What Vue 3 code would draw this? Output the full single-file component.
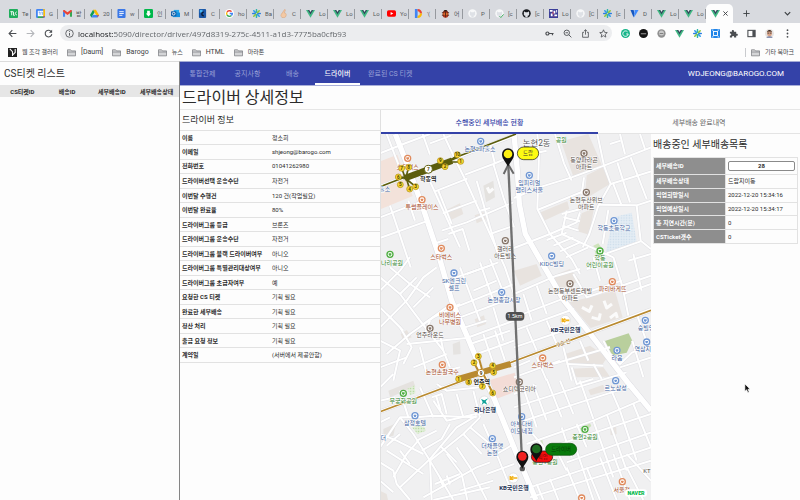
<script setup>
import { ref } from 'vue'

const vue = '<path d="M0 1h10L5 9.6z" fill="#41b883"/><path d="M2 1h6L5 6z" fill="#34495e"/><path d="M3.7 1h2.6L5 3.2z" fill="#e8f3ee"/>'
const burst = '<g stroke-width="1.7" stroke-linecap="round"><path d="M5 .8V3.6M5 6.4v2.8" stroke="#2fb5a8"/><path d="M.8 5h2.8M6.4 5h2.8" stroke="#2a7de1"/><path d="M2 2l2 2M6 6l2 2" stroke="#2a9be8"/><path d="M8 2L6 4M4 6L2 8" stroke="#8cc63f"/></g>'
const cat = (c, extra = '') => `<circle cx="5" cy="5" r="4.7" fill="${c}"/><path d="M3.7 9.4V7.6C2 7.4 1.8 5.9 2.1 5 2 4.4 2 3.5 2.3 2.9c.7 0 1.100.4 1.500.7h2.400c.4-.3.8-.7 1.500-.7.3.6.3 1.500.2 2.100.3.9.1 2.400-1.600 2.600v1.800z" fill="#dee1e6"/>${extra}`

const glyphs = {
  talk: '<rect width="10" height="10" rx="1" fill="#1fae5c"/><path d="M1.500 3h3M3 3v4M5 3v4h1.500M8.700 3.500C7 2.500 6 6.500 8.700 6.600" stroke="#fff" fill="none" stroke-width="1"/>',
  calendar: '<rect width="10" height="10" rx="1.500" fill="#4285f4"/><path d="M8 0h.5A1.500 1.500 0 0 1 10 1.500V8H8z" fill="#fbbc04"/><path d="M2 8h6v2H2z" fill="#34a853"/><path d="M8 8h2l-2 2z" fill="#ea4335"/><rect x="2" y="2" width="6" height="6" fill="#fff"/><path d="M3 3.500h1.500v3M6 3.500h1v3" stroke="#4285f4" fill="none" stroke-width=".8"/>',
  gmail: '<path d="M0 2v6.500h2.300V4z" fill="#4285f4"/><path d="M10 2v6.500H7.700V4z" fill="#34a853"/><path d="M0 2.500C0 1 1.500 1 2.300 1.600L5 3.700l2.700-2.100C8.500 1 10 1 10 2.500L7.700 4.800 5 6.800 2.300 4.800z" fill="#ea4335"/>',
  drive: '<path d="M3.400.8h3.200L10 6.700H6.800z" fill="#fbbc04"/><path d="M3.400.8L5 3.600 1.600 9.500 0 6.700z" fill="#0f9d58"/><path d="M3.200 6.700H10L8.400 9.500H1.600z" fill="#4285f4"/><path d="M8.300 6.700H10L8.400 9.500z" fill="#ea4335"/>',
  docs: '<rect x=".5" width="9" height="10" rx="1" fill="#3b78e7"/><path d="M2.500 3h5M2.500 5h5M2.500 7h3.500" stroke="#fff" stroke-width="1"/>',
  phone: '<rect width="10" height="10" rx="1.500" fill="#00b74a"/><path d="M3.500 2h3v3H8L5 8.300 2 5h1.500z" fill="#fff"/>',
  outlook: '<path d="M3 1h6v5H3z" fill="#28a8ea"/><path d="M2 4l8 0v5H2z" fill="#1490df"/><rect y="2.500" width="6" height="5.500" rx=".7" fill="#0f5ea8"/><circle cx="3" cy="5.200" r="1.500" fill="none" stroke="#fff" stroke-width=".9"/>',
  code: '<rect x="1" width="8" height="10" rx="1" fill="#1b57a6"/><path d="M2 1h3v3H2z" fill="#46b3f3"/><path d="M6.500 3.500c-3 0-3 4 0 4" fill="none" stroke="#0b1d3a" stroke-width="1.500"/>',
  google: '<circle cx="5" cy="5" r="5" fill="#fff"/><g fill="none" stroke-width="1.500"><path d="M7.300 2.900A3.200 3.200 0 0 0 2.200 3.600" stroke="#ea4335"/><path d="M2.200 3.600a3.200 3.200 0 0 0 0 2.900" stroke="#fbbc04"/><path d="M2.200 6.500A3.200 3.200 0 0 0 7.100 7.300" stroke="#34a853"/><path d="M7.100 7.300A3 3 0 0 0 8.200 5H5.200" stroke="#4285f4"/></g>',
  burst,
  hand: '<path d="M3.300 9.500C2 8 1.500 6 3 5.400L6 .8c.6-.5 1.300 0 1 .8L5.800 4.400c1.700 0 2.400 1 2.200 2.200-.2 1.700-1 2.900-2.200 2.900z" fill="#f3c9a5" stroke="#d49a6c" stroke-width=".5"/>',
  vue,
  youtube: '<rect y="1.500" width="10" height="7" rx="1.800" fill="#f00"/><path d="M4 3.300L7 5 4 6.700z" fill="#fff"/>',
  daum: '<path d="M1 0h3v10H1z" fill="#4285f4"/><path d="M4 0c3 0 5 2 5 5H6.500C6.500 3.500 5.500 2.500 4 2.500z" fill="#ea4335"/><path d="M9 5c0 3-2 5-5 5V7.500C5.500 7.500 6.500 6.500 6.500 5z" fill="#fbbc04"/>',
  bug: '<ellipse cx="5" cy="5.700" rx="3.300" ry="3.900" fill="#b3361e"/><path d="M2.500 2.800C3 .5 7 .5 7.500 2.800z" fill="#2b1a12"/><path d="M5 2.800v6.500M1 4h2M7 4h2M1 7h2M7 7h2" stroke="#3d2416" stroke-width=".8"/><circle cx="3.500" cy="5.500" r=".8" fill="#f5b13c"/><circle cx="6.500" cy="5.500" r=".8" fill="#f5b13c"/>',
  catLight: cat('#f7f8f9'),
  catCheck: cat('#f7f8f9', '<path d="M5 8l1.500 1.500L9.500 6" fill="none" stroke="#2da44e" stroke-width="1"/>'),
  catDark: cat('#15181c'),
  pixel: '<rect width="10" height="10" fill="#3c3f99"/><path d="M1 1h3v2H1zM5 2h2v3H5zM2 5h2v3H2zM6 6h3v2H6zM8 1h1v3H8z" fill="#fff"/><path d="M4 3h1v3H4zM5 8h1v1H5z" fill="#e0475c"/>',
  flag: '<path d="M.5 1h3.500l1 4-1 4.500z" fill="#1557c0"/><path d="M5 1h4.500L4.500 9.500l.5-5z" fill="#3e8bff"/>',
  grammar: '<circle cx="5" cy="5" r="5" fill="#17b58a"/><path d="M7.300 3.200A3 3 0 1 0 8 5.500H5.800" fill="none" stroke="#fff" stroke-width="1"/>',
  dark: '<circle cx="5" cy="5" r="5" fill="#141414"/><path d="M2 5.300h6" stroke="#bbb" stroke-width=".9"/>',
  grey: '<circle cx="5" cy="5" r="4.600" fill="#909090"/><circle cx="5" cy="4.500" r="2.800" fill="#c9c9c9"/><path d="M3 5h4" stroke="#777" stroke-width="1"/>',
  frame: '<rect width="10" height="10" rx="1" fill="#2185e8"/><rect x="2.800" y="2.800" width="4.400" height="4.400" fill="none" stroke="#fff" stroke-width="1"/><path d="M1.200 1.200h1.500M1.200 8.800h1.500M7.300 1.200h1.500M7.300 8.800h1.500" stroke="#fff"/>',
  puzzle: '<path d="M1 3h2.200C2.500.3 6 .3 5.500 3H8v2.200c2.500-.5 2.500 2.800 0 2.300V9.500H5.700C6 7.300 3.200 7.300 3.400 9.500H1V7.300c2 .2 2-2.400 0-2.200z" fill="#4b4e52"/>',
  panel: '<rect x="1" y="1.500" width="8" height="7" fill="none" stroke="#4b4e52" stroke-width="1.200"/><path d="M6 1.500h3v7H6z" fill="#4b4e52"/>',
  face: '<circle cx="5" cy="5" r="5" fill="#e6e3e1"/><path d="M1.500 10c.5-3 6.500-3 7 0z" fill="#8a93b0"/><ellipse cx="5" cy="4.800" rx="2.700" ry="3.300" fill="#d9a184"/><path d="M2.200 4C2 0 8 0 7.800 4L7 2.700H3z" fill="#33261f"/><path d="M2.800 4.600h1.800M5.400 4.600h1.800" stroke="#3a3a3a" stroke-width=".9"/>',
  dots: '<g fill="#4b4e52"><circle cx="5" cy="1.300" r="1"/><circle cx="5" cy="5" r="1"/><circle cx="5" cy="8.700" r="1"/></g>',
  key: '<circle cx="2.700" cy="5" r="1.700" fill="none" stroke="#4b4e52" stroke-width="1.300"/><path d="M4.300 5H9.500M8.300 5v2" stroke="#4b4e52" stroke-width="1.300" fill="none"/>',
  zoom: '<circle cx="4.200" cy="4.200" r="3" fill="none" stroke="#4b4e52" stroke-width="1"/><path d="M6.400 6.400L9.300 9.300M2.800 4.200h2.800" stroke="#4b4e52" stroke-width="1"/>',
  share: '<path d="M3.300 3.700H1.800v5.500h6.400V3.700H6.700M5 6.300V1M3.200 2.500L5 .8l1.800 1.700" fill="none" stroke="#4b4e52" stroke-width=".9"/>',
  star: '<path d="M5 .9l1.200 2.800 3 .3-2.300 2 .7 3L5 7.400 2.400 9l.7-3-2.300-2 3-.3z" fill="none" stroke="#4b4e52" stroke-width=".9"/>',
  back: '<path d="M9.300 5H1.300M4.800 1.300L1.200 5l3.600 3.700" fill="none" stroke="#4b4e52" stroke-width="1.200"/>',
  forward: '<path d="M.7 5h8M5.200 1.300L8.800 5 5.200 8.700" fill="none" stroke="#b4b6ba" stroke-width="1.200"/>',
  reload: '<path d="M8.300 3.300A3.700 3.700 0 1 0 8.700 5.700" fill="none" stroke="#4b4e52" stroke-width="1.200"/><path d="M9 .7v3.600H5.400z" fill="#4b4e52"/>',
  info: '<circle cx="5" cy="5" r="4.200" fill="none" stroke="#4b4e52" stroke-width=".9"/><path d="M5 4.400v3M5 2.400v1" stroke="#4b4e52" stroke-width="1"/>',
  folder: '<path d="M.5 2h3.500l1 1.200h4.500v5.500h-9z" fill="#d4d5d7" stroke="#75787c" stroke-width=".8"/><path d="M.5 4.500h9" stroke="#75787c" stroke-width=".7"/>',
  gallery: '<rect width="10" height="10" fill="#222"/><path d="M2 1l3 3v5M8 1v4L5 8" stroke="#fff" stroke-width="1.200" fill="none"/>',
  close: '<path d="M2 2l6 6M8 2L2 8" stroke="#3c4043" stroke-width="1.300"/>',
  plus: '<path d="M5 .5v9M.5 5h9" stroke="#3c4043" stroke-width="1.300"/>',
  down: '<path d="M2 3.500L5 6.500l3-3" fill="none" stroke="#3c4043" stroke-width="1.300"/>'
}

const browserTabs = [
  ['talk', 'Te'], ['calendar', 'G'], ['gmail', '받'], ['drive', '20'], ['docs', 'w'], ['phone', '인'],
  ['outlook', 'M'], ['code', 'C'], ['google', 'ho'], ['burst', 'Ba'], ['hand', 'C'], ['vue', 'Lo'],
  ['vue', 'Lo'], ['vue', 'Lo'], ['youtube', 'Yo'], ['daum', "'("], ['bug', '어'], ['catLight', 'P'],
  ['catCheck', '[c'], ['catDark', '[c'], ['pixel', 'Lo'], ['catLight', '[C'], ['burst', '[c'],
  ['flag', 'D'], ['vue', 'Lo'], ['vue', 'Lo']
]
const navButtons = [['back', '뒤로'], ['forward', '앞으로'], ['reload', '새로고침']]
const addressButtons = ['key', 'zoom', 'share', 'star']
const extensions = ['grammar', 'dark', 'grey', 'vue', 'burst', 'frame', 'puzzle', 'panel', 'face', 'dots']
const bookmarks = [
  ['gallery', '웹 조각 갤러리'], ['folder', '[Daum]'], ['folder', 'Barogo'],
  ['folder', '뉴스'], ['folder', 'HTML'], ['folder', '마라톤']
]
const isKorean = (t) => /[가-힣]/.test(t)

const url = ref('localhost:5090/director/driver/497d8319-275c-4511-a1d3-7775ba0cfb93')

const ticketColumns = ['CS티켓ID', '배송ID', '세부배송ID', '세부배송상태']
const menu = ['통합관제', '공지사항', '배송', '드라이버', '완료된 CS 티켓']
const activeMenu = '드라이버'

const driver = [
  ['이름', '정소희'],
  ['이메일', 'shjeong@barogo.com'],
  ['전화번호', '01041262980'],
  ['드라이버선택 운송수단', '자전거'],
  ['이번달 수행건', '120 건(작업필요)'],
  ['이번달 완료율', '80%'],
  ['드라이버그룹 등급', '브론즈'],
  ['드라이버그룹 운송수단', '자전거'],
  ['드라이버그룹 블랙 드라이버여부', '아니오'],
  ['드라이버그룹 특별관리대상여부', '아니오'],
  ['드라이버그룹 초급자여부', '예'],
  ['요청한 CS 티켓', '기획 필요'],
  ['완료한 세부배송', '기획 필요'],
  ['정산 처리', '기획 필요'],
  ['출금 요청 정보', '기획 필요'],
  ['계약일', '(서버에서 제공안함)']
]
const delivery = [
  ['세부배송상태', '드랍지이동'],
  ['픽업희망일시', '2022-12-20 15:34:16'],
  ['픽업예상일시', '2022-12-20 15:34:17'],
  ['총 지연시간(분)', '0'],
  ['CSTicket갯수', '0']
]

const areas = [
  ['#f3e2da', '0,82 52,62 98,186 0,226'],
  ['#f3dcd6', '330,738 404,716 418,768 346,796'],
  ['#e8e3df', '543,22 625,0 665,92 580,128'],
  ['#e8e3df', '620,124 668,100 690,150 614,196'],
  ['#e8e3df', '482,235 562,202 568,225 492,260'],
  ['#e8e3df', '605,238 642,222 628,302 592,292'],
  ['#e8e3df', '198,228 240,208 250,240 208,260'],
  ['#e8e3df', '284,244 310,234 318,256 290,268'],
  ['#e4e2df', '310,155 340,140 345,190 318,205'],
  ['#e8e3df', '402,410 470,390 485,425 420,455'],
  ['#e8e3df', '510,428 570,405 600,440 535,470'],
  ['#e8e3df', '568,505 705,470 728,550 632,582'],
  ['#e8e3df', '555,660 630,635 682,670 668,690 570,690'],
  ['#e8e3df', '572,704 670,700 690,728 590,730'],
  ['#e5e3e1', '218,630 240,622 242,660 220,662'],
  ['#e8e3df', '284,556 312,544 318,570 292,580'],
  ['#e8e3df', '62,600 80,588 95,610 70,620'],
  ['#e5e2df', '25,770 100,740 106,758 30,790'],
  ['#e5e2df', '10,885 48,868 40,905 10,910'],
  ['#e8e3df', '625,768 670,752 675,772 632,784'],
  ['#e8e3df', '690,880 708,872 710,900 692,904'],
  ['#e8e3df', '0,1070 20,1080 24,1098 0,1098'],
  ['url(#water)', '700,250 755,236 770,322 677,356'],
  ['url(#grass)', '82,764 104,754 106,778 90,784'],
  ['url(#grass)', '96,880 130,872 138,890 112,900'],
  ['#b9cf9d', '672,622 746,598 757,620 740,656 702,664 684,652'],
  ['#cfe3bd', '640,335 655,328 678,360 650,372'],
  ['#cfe3bd', '478,914 486,914 492,940 484,940'],
  ['#cfe3bd', '598,884 630,868 634,876 604,900']
]

const roads = [
  'M0,58L70,30 150,0', 'M20,0L66,120', 'M190,0L225,75 262,150 330,300 375,400 402,480',
  'M128,0L150,62', 'M150,28L215,4', 'M255,122L340,90 402,64', 'M165,172L262,134', 'M140,120L240,340',
  'M188,238L290,200', 'M185,290L260,265 400,205', 'M290,140L352,355', 'M0,250L118,205', 'M0,312L145,260',
  'M30,215L92,400', 'M85,200L105,260', 'M205,300L248,285 268,350', 'M340,90L370,190 402,280', 'M225,75L330,30',
  'M330,30L345,90', 'M175,170L215,270', 'M160,330L205,315', 'M300,230L330,222', 'M330,300L402,275',
  'M477,60L472,225 510,300 575,375 600,420', 'M472,0L477,60', 'M525,0L552,88 575,140', 'M402,192L477,160 575,130 672,95 813,40',
  'M652,0L672,95 692,150 655,215 628,300 608,340', 'M472,228L620,168', 'M612,130L605,180', 'M545,240L602,225',
  'M510,300L590,265 600,235', 'M692,150L813,112', 'M655,212L770,214 813,200', 'M712,85L750,205', 'M752,70L800,195',
  'M685,228L668,330', 'M402,342L510,300', 'M560,230L545,300 700,370', 'M550,250L600,262', 'M548,275L596,290',
  'M500,318L560,296M520,335L580,310M540,352L600,325M558,370L625,340', 'M770,215L782,320 813,345', 'M680,358L782,322', 'M540,20L560,10',
  'M720,0L735,60', 'M780,0L795,45', 'M700,150L725,215', 'M690,30L722,20', 'M455,60L500,50',
  'M0,430L60,480 120,560 190,650 210,700', 'M0,520L60,580 95,640 70,690', 'M0,580L80,500 130,430 170,400', 'M20,660L90,600 160,550 240,510',
  'M0,470L60,410 90,369', 'M20,540L70,590', 'M60,480L110,430', 'M100,520L160,460', 'M130,570L200,520', 'M30,400L90,450 150,490',
  'M80,630L260,612 402,560', 'M182,612L190,650', 'M240,550L402,490', 'M255,580L320,560', 'M225,520L402,450', 'M200,440L330,395',
  'M240,400L270,480 300,560', 'M300,385L340,500', 'M330,375L380,500', 'M260,420L355,385', 'M280,470L350,440', 'M340,520L370,620',
  'M310,600L340,690', 'M345,590L375,680', 'M290,660L402,620', 'M270,630L390,590', 'M120,640L140,720', 'M0,620L60,650 40,740',
  'M100,700L200,660', 'M0,700L80,670', 'M160,720L240,700', 'M130,610L150,560', 'M0,760L40,720',
  'M402,480L530,425 600,405', 'M402,550L560,490', 'M402,590L582,525', 'M430,480L455,560', 'M470,455L500,540', 'M440,580L470,650',
  'M500,560L530,630', 'M402,640L610,570', 'M580,420L620,490 740,450 813,425', 'M552,498L725,440', 'M640,369L660,440', 'M700,369L728,460 745,545',
  'M640,590L745,550 813,525', 'M760,360L785,470', 'M745,380L813,360', 'M620,405L700,385', 'M770,540L813,660', 'M757,620L790,730',
  'M670,620L690,660 720,690 757,655 813,635', 'M550,640L575,740', 'M520,690L690,640', 'M560,690L670,695', 'M640,690L665,735', 'M720,700L813,670',
  'M402,730L540,680', 'M470,670L500,740', 'M402,700L450,680', 'M575,700L590,750 640,735', 'M600,620L625,680', 'M730,480L813,450', 'M560,580L590,590',
  'M160,800L200,860 310,835', 'M155,790L185,780 200,840M168,785L182,830', 'M0,940L60,850 110,850 160,845 290,850', 'M60,850L100,900 150,980 220,1098', 'M0,900L50,920 130,960',
  'M20,950L130,1020', 'M40,1030L80,960 115,920', 'M20,935L60,900', 'M0,985L40,1010 50,1050 90,1098', 'M60,1060L150,975 230,880 290,845',
  'M90,990L60,950', 'M110,920L170,890', 'M125,950L185,915 210,870', 'M150,980L250,900 300,850', 'M130,1090L290,1000 330,985', 'M150,980L155,1098',
  'M230,940L270,1000 320,1098', 'M200,960L245,1020 262,1098', 'M250,900L305,960', 'M270,880L330,930', 'M180,935L230,985', 'M310,870L350,960 390,1060',
  'M165,1050L240,1020M180,1030L190,1060M200,1024L210,1052', 'M0,1040L40,1075', 'M0,865L30,850', 'M350,960L402,930', 'M320,1020L402,990', 'M240,1070L340,1040',
  'M60,770L85,850', 'M120,760L160,850', 'M170,750L200,770 300,760', 'M230,780L250,850', 'M280,770L300,850', 'M0,800L45,790', 'M160,1098L330,1060',
  'M402,820L560,770 740,715', 'M402,870L600,805 760,755', 'M440,930L640,860 780,800', 'M480,950L813,840', 'M560,985L700,935 813,895', 'M450,1060L600,1010 813,940',
  'M430,760L470,880', 'M460,750L500,860', 'M500,735L545,850', 'M540,740L580,840', 'M600,740L640,855', 'M560,1000L600,1098', 'M520,930L560,1010',
  'M640,860L700,1030', 'M590,950L640,1098', 'M680,840L740,1010', 'M720,830L770,980', 'M760,810L813,940', 'M620,1000L660,1098', 'M660,970L710,1098', 'M700,960L750,1098',
  'M470,1050L490,1098', 'M510,1035L535,1098', 'M450,890L500,950', 'M545,880L575,970', 'M590,870L620,940', 'M450,1090L813,980', 'M740,1000L790,1098', 'M402,780L470,755', 'M690,760L720,830', 'M740,960L813,1040'
]
const avenues = [
  'M46,0L85,100 130,225 175,360 215,500 265,615 300,700 345,800 410,960 468,1098',
  'M402,0L412,110 418,210 436,300 482,380 552,500 642,614 742,744 813,830'
]

const C = { food: '#a34a28', blue: '#3d5f9e', green: '#2c7f1f', brown: '#544a44', navy: '#1a2f52' }
const ring = { food: '#e08a5c', blue: '#6f97d4', green: '#4fae42', brown: '#87766a' }
const pois = [
  ['blue', 302, 22, '논현2파출소', 300, 52], ['food', 83, 73, '스타벅스', 83, 105], ['food', 126, 197, '투썸플레이스', 126, 226],
  ['food', 184, 343, '스타벅스', 184, 374], ['brown', 376, 320, '갤러리', 376, 350, '아트빌스'], ['blue', 448, 124, '임피리얼', 448, 153, '팰리스서울'],
  ['brown', 612, 58, '동양파라곤', 612, 85, '아파트'], ['brown', 619, 175, '논현두산위브', 619, 203, '아파트'], ['blue', 702, 260, '학동초등학교', 702, 288],
  ['green', 660, 351, '학동', 660, 379, '어린이공원'], ['blue', 515, 366, 'KIDC빌딩', 516, 395], ['green', 30, 361, '개나리공원', 28, 392],
  ['blue', 222, 417, 'SK엔크린', 222, 446, '셀프'], ['blue', 365, 475, '논현종합시장', 372, 504], ['food', 210, 520, '비에비스', 210, 548, '나무병원'],
  ['brown', 150, 583, '언주라운드', 150, 610], ['food', 187, 692, '논현손칼국수', 187, 721], ['brown', 570, 449, '논현동부센트레빌', 570, 477, '아파트'],
  ['food', 697, 443, '파리바게뜨', 698, 472], ['blue', 796, 559, '숭빌딩', 798, 587], ['food', 488, 672, '스타벅스', 488, 700],
  ['blue', 711, 649, '라움', 711, 678], ['blue', 800, 624, '역삼지', 788, 650], ['blue', 707, 740, '르노삼성', 707, 768],
  ['green', 70, 778, '무궁화공원', 70, 806], ['blue', 105, 845, '삼정호텔', 105, 874], ['blue', 337, 914, '더채플앳', 337, 943, '논현'],
  ['brown', 418, 744, '쇼디텍코리아', 418, 771], ['blue', 425, 848, '아부다비', 425, 876, '이모네집'], ['green', 615, 886, '충현2공원', 615, 916],
  ['food', 727, 1043, '서울정', 725, 1073], ['food', 605, 1092, '', 605, 1110]
]
const exits = [
  [65, 103, 7], [86, 100, 8], [55, 129, 6], [61, 152, 5], [89, 165, 4], [107, 158, 3], [181, 80, 9], [195, 98, 2], [232, 62, 10], [242, 82, 1],
  [295, 667, 3], [282, 686, 2], [338, 695, 4], [341, 715, 5], [236, 735, 1], [266, 744, 8], [307, 757, 7], [338, 777, 6]
]
</script>

<template>
  <div class="browser">
    <header class="chrome">
      <div class="tabstrip">
        <button v-for="(t, i) in browserTabs" :key="i" class="btab" type="button">
          <svg class="icon" viewBox="0 0 10 10" v-html="glyphs[t[0]]" />
          <span>{{ t[1] }}</span>
        </button>
        <div class="btab current">
          <svg class="icon" viewBox="0 0 10 10" v-html="glyphs.vue" />
          <button type="button" class="plain small" aria-label="탭 닫기"><svg viewBox="0 0 10 10" v-html="glyphs.close" /></button>
        </div>
        <button type="button" class="plain add" aria-label="새 탭"><svg viewBox="0 0 10 10" v-html="glyphs.plus" /></button>
        <button type="button" class="plain more" aria-label="탭 검색"><svg viewBox="0 0 10 10" v-html="glyphs.down" /></button>
      </div>

      <div class="toolbar">
        <button v-for="b in navButtons" :key="b[0]" type="button" class="plain" :aria-label="b[1]"><svg viewBox="0 0 10 10" v-html="glyphs[b[0]]" /></button>
        <div class="address">
          <svg class="icon" viewBox="0 0 10 10" v-html="glyphs.info" />
          <input v-model="url" type="text" aria-label="주소창" spellcheck="false">
          <button v-for="b in addressButtons" :key="b" type="button" class="plain" :aria-label="b"><svg viewBox="0 0 10 10" v-html="glyphs[b]" /></button>
        </div>
        <button v-for="b in extensions" :key="b" type="button" class="plain" :aria-label="b"><svg viewBox="0 0 10 10" v-html="glyphs[b]" /></button>
      </div>

      <nav class="bookmarks">
        <a v-for="b in bookmarks" :key="b[1]" href="#" :class="{ ko: isKorean(b[1]) }">
          <svg class="icon" viewBox="0 0 10 10" v-html="glyphs[b[0]]" />{{ b[1] }}
        </a>
        <a href="#" class="other ko"><svg class="icon" viewBox="0 0 10 10" v-html="glyphs.folder" />기타 북마크</a>
      </nav>
    </header>

    <div class="page">
      <aside class="tickets">
        <h2>CS티켓 리스트</h2>
        <table>
          <thead><tr><th v-for="c in ticketColumns" :key="c">{{ c }}</th></tr></thead>
        </table>
      </aside>

      <main>
        <nav class="menu">
          <a v-for="m in menu" :key="m" href="#" :class="{ active: m === activeMenu }">{{ m }}</a>
          <button type="button" class="user">WDJEONG@BAROGO.COM</button>
        </nav>
        <h1>드라이버 상세정보</h1>

        <div class="columns">
          <section class="driver">
            <h2>드라이버 정보</h2>
            <table>
              <tbody>
                <tr v-for="r in driver" :key="r[0]"><th scope="row">{{ r[0] }}</th><td>{{ r[1] }}</td></tr>
              </tbody>
            </table>
          </section>

          <section class="status">
            <div class="tabs" role="tablist">
              <button type="button" role="tab" aria-selected="true" class="on">수행중인 세부배송 현황</button>
              <button type="button" role="tab" aria-selected="false">세부배송 완료내역</button>
            </div>
            <div class="split">
              <div class="map">
                <svg viewBox="3 0 810 1098" preserveAspectRatio="xMinYMin slice">
                  <defs>
                    <pattern id="water" width="8" height="8" patternUnits="userSpaceOnUse"><rect width="8" height="8" fill="#e3ecf4" /><circle cx="4" cy="4" r="2" fill="#c8d9ea" /></pattern>
                    <pattern id="grass" width="8" height="8" patternUnits="userSpaceOnUse"><rect width="8" height="8" fill="#e2efd9" /><circle cx="4" cy="4" r="2" fill="#a9d391" /></pattern>
                  </defs>
                  <rect width="820" height="1110" fill="#f0f0f1" />
                  <polygon v-for="(a, i) in areas" :key="'a' + i" :points="a[1]" :fill="a[0]" />
                  <g fill="none" stroke-linejoin="round">
                    <g stroke="#e0e0e4" stroke-width="9"><path v-for="(d, i) in roads" :key="i" :d="d" /></g>
                    <g stroke="#dcdce1" stroke-width="19"><path v-for="(d, i) in avenues" :key="i" :d="d" /><path d="M0,158L408,2M0,833L402,682 813,529" stroke-width="13" /></g>
                    <g stroke="#fff" stroke-width="6"><path v-for="(d, i) in roads" :key="i" :d="d" /></g>
                    <g stroke="#fff" stroke-width="16"><path v-for="(d, i) in avenues" :key="i" :d="d" /><path d="M0,158L408,2M0,833L402,682 813,529" stroke-width="10" /></g>
                    <g stroke="#fbfbfb" stroke-width="9"><path d="M606,520l22,12 8-18M635,550l22,6 4-18M672,500l8,22 16-12M690,552l18-14 4 14M322,160l6,14 12-10" /></g>
                    <path d="M0,158L408,0" stroke="#5c5d0c" stroke-width="5" />
                    <path d="M0,833L402,682 813,529" stroke="#b98a30" stroke-width="5" />
                    <path d="M70,134L150,104 235,70M178,84L242,84M86,100L78,130 89,165M65,103L75,130 55,129M75,132L107,158M195,98L232,62" stroke="#5c5d0c" stroke-width="5" />
                    <path d="M74,133L216,80" stroke="#5c5d0c" stroke-width="19" />
                    <path d="M230,736L392,690" stroke="#b98a30" stroke-width="18" />
                    <path d="M295,667L310,720 338,777M282,686L300,720M320,712L341,700" stroke="#b98a30" stroke-width="6" />
                  </g>
                  <circle cx="145" cy="106" r="12" fill="#fff" stroke="#5c5d0c" stroke-width="3" />
                  <circle cx="303" cy="717" r="11" fill="#fff" stroke="#b98a30" stroke-width="3" />
                  <g class="num"><text x="145" y="112">7</text><text x="303" y="723">9</text></g>
                  <g class="poi">
                    <g v-for="(p, i) in pois" :key="i" :fill="C[p[0]]">
                      <circle :cx="p[1]" :cy="p[2]" r="9" fill="#fff" :stroke="ring[p[0]]" stroke-width="4" />
                      <path :transform="`translate(${p[1]} ${p[2]})`" d="M-4,-3h8v3l-2,4h-4l-2,-4z" :fill="ring[p[0]]" />
                      <text :x="p[4]" :y="p[5]">{{ p[3] }}</text>
                      <text v-if="p[6]" :x="p[4]" :y="p[5] + 21">{{ p[6] }}</text>
                    </g>
                    <text x="14" y="171" :fill="C.blue">출소</text>
                    <text x="10" y="918" :fill="C.blue">더</text>
                    <text x="544" y="24" :fill="C.green">공원</text>
                    <text x="495" y="991" :fill="C.green">충현1공원</text>
                    <text x="801" y="1016" :fill="C.brown">KT</text>
                    <text x="551" y="633" fill="#94691a" transform="rotate(-20 551 627)">9호선</text>
                    <g class="strong" :fill="C.navy">
                      <text x="557" y="593">KB국민은행</text><text x="402" y="1068">KB국민은행</text><text x="315" y="835">하나은행</text>
                      <g fill="#1a1a1a"><text x="145" y="141">학동역</text><text x="305" y="751">언주역</text></g>
                    </g>
                    <text x="470" y="37" class="district" fill="#555">논현2동</text>
                  </g>
                  <g class="num">
                    <g v-for="(e, i) in exits" :key="i">
                      <circle :cx="e[0]" :cy="e[1]" r="9" fill="#f8d632" stroke="#a98d17" stroke-width="2" />
                      <text :x="e[0]" :y="e[1] + 5">{{ e[2] }}</text>
                    </g>
                  </g>
                  <g stroke="#d8d8d8" stroke-width="2" fill="#fff"><circle cx="556" cy="559" r="15" /><circle cx="400" cy="1032" r="15" /><circle cx="313" cy="801" r="15" /></g>
                  <g stroke="#f1b21b" stroke-width="5" fill="none"><path d="M547,553v12M548,560l8-6M548,559l8,5M556,559h12" /><path d="M391,1026v12M392,1033l8-6M392,1032l8,5M400,1032h12" /></g>
                  <path d="M303,795l10,4 12-6-8,9 5,10-10-5-7,6 3-9z" fill="#15a39a" />

                  <path d="M385,96L427,1002" stroke="#707070" stroke-width="7" />
                  <path d="M371,120L385,92 401,119" fill="none" stroke="#6a6a6a" stroke-width="6" />
                  <circle cx="427" cy="1004" r="8" fill="#555" />
                  <rect x="377" y="534" width="56" height="26" rx="11" fill="#505050" />
                  <text x="405" y="553" class="badge" fill="#fff">1.5km</text>

                  <g stroke="#111" stroke-width="2">
                    <rect x="412" y="39" width="64" height="38" rx="19" fill="#fdfb12" />
                    <rect x="454" y="951" width="64" height="34" rx="17" fill="#f60d0d" />
                    <rect x="497" y="928" width="93" height="36" rx="18" fill="#087a0b" stroke="#064f08" />
                  </g>
                  <g class="badge"><text x="444" y="64" fill="#333">드랍</text><text x="488" y="974" fill="#7a0606">픽업</text><text x="543" y="952" fill="#043c05">드라이버</text></g>
                  <g fill="#111">
                    <path d="M384,98C378,84 366,76 366,61a18,18 0 0 1 36,0C402,76 390,84 384,98z" />
                    <path d="M469,982C463,968 451,960 451,946a18,18 0 0 1 36,0C487,960 475,968 469,982z" />
                    <path d="M427,1004C421,990 409,982 409,968a18,18 0 0 1 36,0C445,982 433,990 427,1004z" />
                  </g>
                  <circle cx="384" cy="60" r="13" fill="#fdf012" />
                  <circle cx="469" cy="945" r="13" fill="#1d6b20" />
                  <circle cx="427" cy="967" r="13" fill="#f02020" />
                  <rect x="735" y="1066" width="66" height="22" rx="9" fill="#fff" />
                  <text x="768" y="1083" class="brand">NAVER</text>
                </svg>
              </div>

              <section class="deliveries">
                <h2>배송중인 세부배송목록</h2>
                <table>
                  <tbody>
                    <tr><th scope="row">세부배송ID</th><td class="action"><button type="button">28</button></td></tr>
                    <tr v-for="r in delivery" :key="r[0]"><th scope="row">{{ r[0] }}</th><td>{{ r[1] }}</td></tr>
                  </tbody>
                </table>
              </section>
            </div>
          </section>
        </div>
      </main>
    </div>

    <svg class="pointer" viewBox="0 0 8 12"><path d="M1 .8v8.400l2-1.800 1.400 3.200 1.500-.7-1.400-3.100H7z" fill="#111" stroke="#fff" stroke-width=".7" /></svg>
  </div>
</template>

<style>
body {
  margin: 0;
  background: #fdfdfd;
}
</style>

<style scoped>
* {
  box-sizing: border-box;
}
.browser {
  height: 100vh;
  display: flex;
  flex-direction: column;
  overflow: hidden;
  background: #fdfdfd;
  color: #2b2b2b;
  font-family: Roboto, "Noto Sans CJK KR", sans-serif;
  font-size: 6px;
}
button,
input {
  font: inherit;
  color: inherit;
  border: 0;
  padding: 0;
  background: none;
}
a {
  color: inherit;
  text-decoration: none;
}
h1,
h2 {
  margin: 0;
  font-weight: 400;
}
table {
  width: 100%;
  border-collapse: collapse;
}
.icon {
  width: 9px;
  height: 9px;
  flex: none;
}
.plain {
  width: 18px;
  height: 18px;
  flex: none;
  display: grid;
  place-items: center;
}
.plain svg {
  width: 9px;
  height: 9px;
}
.tabstrip {
  height: 23px;
  padding: 4px 4px 0;
  display: flex;
  background: #d8dadf;
}
.btab {
  width: 27px;
  height: 19px;
  padding-left: 5px;
  display: flex;
  align-items: center;
  gap: 4px;
  flex: none;
  white-space: nowrap;
  line-height: 8px;
  color: #55585c;
  background: linear-gradient(#96999e, #96999e) right center / 1px 10px no-repeat;
}
.btab.current {
  gap: 0;
  background: #fdfdfd;
  border-radius: 5px 5px 0 0;
}
.plain.small {
  width: 10px;
}
.plain.small svg {
  width: 7px;
  height: 7px;
}
.plain.add {
  margin-left: 4px;
}
.plain.add svg {
  width: 7px;
  height: 7px;
}
.plain.more {
  margin-left: auto;
}
.toolbar {
  height: 20px;
  padding: 0 4px 0 3px;
  display: flex;
  align-items: center;
}
.address {
  flex: 1;
  height: 16px;
  margin: 0 4px 0 3px;
  padding-left: 5px;
  display: flex;
  align-items: center;
  border-radius: 8px;
  background: #ecedef;
}
.address input {
  flex: 1;
  min-width: 0;
  margin-left: 4px;
  height: 16px;
  font-family: "Open Sans", sans-serif;
  font-size: 8px;
  outline: 0;
  background: linear-gradient(90deg, #16181b 35px, #5c6064 35px);
  background-clip: text;
  -webkit-background-clip: text;
  -webkit-text-fill-color: transparent;
}
.bookmarks {
  height: 18px;
  padding: 0 6px 0 8px;
  display: flex;
  align-items: center;
  gap: 9px;
  font-size: 7px;
  line-height: 8px;
  color: #3c4043;
}
.bookmarks a {
  display: flex;
  align-items: center;
  gap: 5px;
}
.bookmarks .ko {
  font-size: 6px;
}
.bookmarks .other {
  margin-left: auto;
  padding-left: 5px;
  border-left: 1px solid #c9cbce;
}
.page {
  flex: 1;
  min-height: 0;
  display: flex;
}
.tickets {
  width: 180px;
  flex: none;
  border-top: 1px solid #dcdcdc;
  border-right: 1px solid #858585;
}
.tickets h2 {
  padding-left: 4px;
  font-size: 10px;
  line-height: 23px;
}
.tickets table {
  table-layout: fixed;
}
.tickets th {
  height: 12px;
  padding: 0;
  background: #e6e6e6;
}
main {
  flex: 1;
  min-width: 0;
  display: flex;
  flex-direction: column;
}
.menu {
  height: 25px;
  flex: none;
  display: flex;
  border-top: 1px solid #a5abd6;
  border-bottom: 1px solid #a9afd9;
  background: #3442a8;
  color: #98a0d6;
  font-size: 7px;
  line-height: 8px;
}
.menu a {
  min-width: 45px;
  padding: 2px 8px 0;
  display: flex;
  align-items: center;
  justify-content: center;
  border-bottom: 2px solid transparent;
}
.menu .active {
  color: #fff;
  font-weight: 500;
  border-color: #fff;
}
.menu .user {
  margin: 0 16px 0 auto;
  color: #fff;
  font-size: 8px;
}
h1 {
  padding-left: 2px;
  font-size: 16px;
  line-height: 23px;
  border-bottom: 1px solid #e6e6e6;
}
.columns {
  flex: 1;
  min-height: 0;
  display: flex;
}
.driver {
  width: 200px;
  flex: none;
}
.driver h2 {
  padding-left: 2px;
  font-size: 9px;
  line-height: 20px;
  border-bottom: 1px solid #e2e2e2;
}
.driver table {
  height: 232px;
}
.driver th,
.driver td {
  padding: 0 2px;
  line-height: 8px;
  text-align: left;
  border-bottom: 1px solid #e2e2e2;
}
.driver th {
  width: 90px;
}
.status {
  flex: 1;
  min-width: 0;
  display: flex;
  flex-direction: column;
  border-left: 1px solid #e0e0e0;
}
.tabs {
  height: 24px;
  flex: none;
  display: flex;
  border-bottom: 1px solid #e4e4e4;
}
.tabs button {
  flex: 1 1 auto;
  height: 24px;
  padding-top: 2px;
  font-size: 7px;
  color: #666;
  border-bottom: 2px solid transparent;
}
.tabs .on {
  color: #3442a8;
  font-weight: 500;
  border-color: #3442a8;
}
.split {
  flex: 1;
  min-height: 0;
  display: grid;
  grid-template-columns: 270fr 149fr;
}
.map {
  min-height: 0;
  overflow: hidden;
}
.map svg {
  display: block;
  width: 100%;
  height: 100%;
}
.map text {
  text-anchor: middle;
}
.poi text {
  font-size: 18px;
  stroke: #fff;
  stroke-width: 3px;
  stroke-linejoin: round;
  paint-order: stroke;
}
.poi .strong text {
  font-weight: 700;
}
.poi .district {
  font-size: 25px;
}
.num text {
  font-size: 14px;
  font-weight: 700;
  fill: #4a3d00;
}
.badge {
  font-size: 16px;
}
.brand {
  font-size: 16px;
  font-weight: 900;
  fill: #03b84c;
}
.deliveries {
  padding: 0 2px;
}
.deliveries h2 {
  font-size: 10px;
  line-height: 21px;
  margin-bottom: 2px;
  white-space: nowrap;
}
.deliveries table {
  height: 87px;
}
.deliveries th,
.deliveries td {
  padding: 0 2px;
  line-height: 8px;
  text-align: left;
  border: 1px solid #e2e2e2;
}
.deliveries th {
  width: 50%;
  color: #fff;
  background: #8e8e8e;
}
.deliveries button {
  display: block;
  width: 100%;
  height: 10px;
  font-weight: 700;
  border: 1px solid #8a8a8a;
  border-radius: 2px;
  background: #fff;
}
.pointer {
  position: fixed;
  left: 744px;
  top: 383px;
  width: 7px;
  height: 11px;
}
</style>
